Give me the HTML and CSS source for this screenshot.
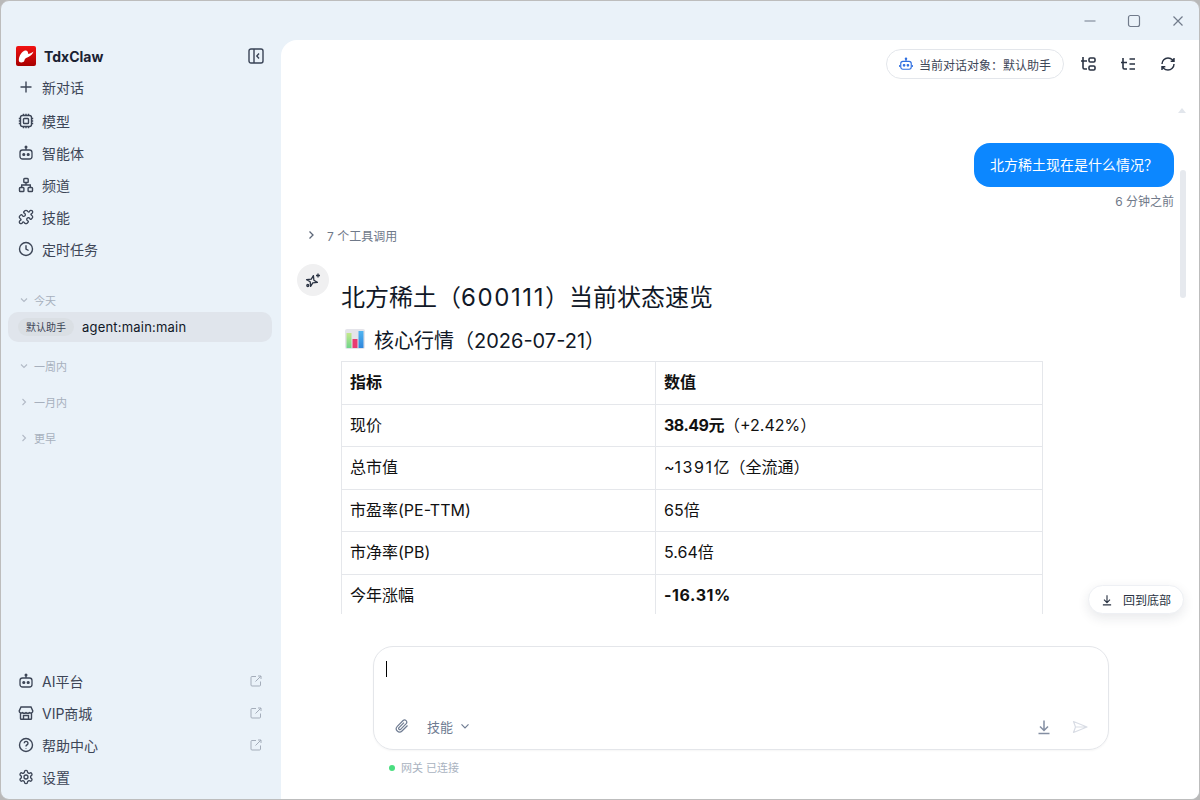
FILE: index.html
```html
<!DOCTYPE html>
<html lang="zh">
<head>
<meta charset="utf-8">
<title>TdxClaw</title>
<link rel="stylesheet" href="styles.css">
</head>
<body>
<div class="window">
  <aside class="sidebar">
    <div class="brand">
      <svg class="logo" viewBox="0 0 20 20"><defs><linearGradient id="lg" x1="0" y1="0" x2="0" y2="1"><stop offset="0" stop-color="#f21212"/><stop offset="1" stop-color="#a80000"/></linearGradient></defs><rect width="20" height="20" rx="2" fill="url(#lg)"/><path d="M17.500 5.500C15.500 7 13.500 7.800 12 7.800 12.400 5.800 11 4 9 4.600 6 5.600 2.800 10 2.800 14.200c0 2.200 2.400 2.600 4.400 1.800 1.600-.7 1-2.300 2-3.300 2.400-2 6.500-2 8.300-7.200z" fill="#fff"/></svg>
      <span class="brand-name">TdxClaw</span>
      <svg class="ico collapse" viewBox="0 0 16 16"><rect x="1" y="1" width="14" height="14" rx="2"/><path d="M6 1v14M11 5.500 8.800 8l2.200 2.500"/></svg>
    </div>
    <nav class="nav new">
      <a class="item"><svg class="ico" viewBox="0 0 16 16"><path d="M8 2.500v11M2.500 8h11"/></svg><span>新对话</span></a>
    </nav>
    <nav class="nav">
      <a class="item"><svg class="ico" viewBox="0 0 16 16"><rect x="2.500" y="2.500" width="11" height="11" rx="2"/><rect x="5.500" y="5.500" width="5" height="5" rx=".8"/><path d="M5.500 .8v1.700M8 .8v1.700M10.500 .8v1.700M5.500 13.500v1.700M8 13.500v1.700M10.500 13.500v1.700M.8 5.500h1.700M.8 8h1.700M.8 10.500h1.700M13.500 5.500h1.700M13.500 8h1.700M13.500 10.500h1.700"/></svg><span>模型</span></a>
      <a class="item"><svg class="ico" viewBox="0 0 16 16"><use href="#bot"/></svg><span>智能体</span></a>
      <a class="item"><svg class="ico" viewBox="0 0 16 16"><rect x="5.800" y="1.500" width="4.400" height="4" rx=".8"/><rect x="1.500" y="10.500" width="4.400" height="4" rx=".8"/><rect x="10.100" y="10.500" width="4.400" height="4" rx=".8"/><path d="M8 5.500V8M3.700 10.500V8h8.600v2.500"/></svg><span>频道</span></a>
      <a class="item"><svg class="ico lucide" viewBox="0 0 24 24"><path d="M19.439 7.85c-.049.322.059.648.289.878l1.568 1.568c.47.47.706 1.087.706 1.704s-.235 1.233-.706 1.704l-1.611 1.611a.98.98 0 0 1-.837.276c-.47-.07-.802-.48-.968-.925a2.501 2.501 0 1 0-3.214 3.214c.446.166.855.497.925.968a.979.979 0 0 1-.276.837l-1.61 1.61a2.404 2.404 0 0 1-1.705.707 2.402 2.402 0 0 1-1.704-.706l-1.568-1.568a1.026 1.026 0 0 0-.877-.29c-.493.074-.84.504-1.02.968a2.5 2.5 0 1 1-3.237-3.237c.464-.18.894-.527.967-1.02a1.026 1.026 0 0 0-.289-.877l-1.568-1.568A2.402 2.402 0 0 1 1.998 12c0-.617.236-1.234.706-1.704L4.230 8.770c.24-.24.581-.353.917-.303.515.077.877.528 1.073 1.010a2.5 2.5 0 1 0 3.259-3.259c-.482-.196-.933-.558-1.010-1.073-.05-.336.062-.676.303-.917l1.525-1.525A2.402 2.402 0 0 1 12 1.998c.617 0 1.234.236 1.704.706l1.568 1.568c.23.23.556.338.877.29.493-.074.84-.504 1.020-.968a2.5 2.5 0 1 1 3.237 3.237c-.464.18-.894.527-.967 1.020Z"/></svg><span>技能</span></a>
      <a class="item"><svg class="ico" viewBox="0 0 16 16"><circle cx="8" cy="8" r="6.500"/><path d="M8 4.200V8l2.600 1.500"/></svg><span>定时任务</span></a>
    </nav>
    <section class="history">
      <div class="group"><svg class="chev" viewBox="0 0 10 10"><path d="M2 3.500 5 6.500 8 3.500"/></svg><span>今天</span></div>
      <div class="session"><span class="tag">默认助手</span><span class="session-name">agent:main:main</span></div>
      <div class="group later"><svg class="chev" viewBox="0 0 10 10"><path d="M2 3.500 5 6.500 8 3.500"/></svg><span>一周内</span></div>
      <div class="group later"><svg class="chev" viewBox="0 0 10 10"><path d="M3.500 2 6.500 5 3.500 8"/></svg><span>一月内</span></div>
      <div class="group later"><svg class="chev" viewBox="0 0 10 10"><path d="M3.500 2 6.500 5 3.500 8"/></svg><span>更早</span></div>
    </section>
    <nav class="nav bottom">
      <a class="item"><svg class="ico" viewBox="0 0 16 16"><use href="#bot"/></svg><span>AI平台</span><svg class="ext" viewBox="0 0 12 12"><use href="#ext"/></svg></a>
      <a class="item"><svg class="ico" viewBox="0 0 16 16"><path d="M3 2h10l1.800 4a2.100 2.100 0 0 1-3.400 1.600 2.600 2.600 0 0 1-3.400 0 2.600 2.600 0 0 1-3.400 0A2.100 2.100 0 0 1 1.200 6zM2.500 8v5.500a.8.800 0 0 0 .8.800h9.400a.8.800 0 0 0 .8-.8V8M5.500 14v-3.500h5V14"/></svg><span>VIP商城</span><svg class="ext" viewBox="0 0 12 12"><use href="#ext"/></svg></a>
      <a class="item"><svg class="ico" viewBox="0 0 16 16"><circle cx="8" cy="8" r="6.500"/><path d="M6.200 6.300a1.900 1.900 0 1 1 2.700 1.700c-.6.300-.9.700-.9 1.400"/><path d="M8 11.300v.4"/></svg><span>帮助中心</span><svg class="ext" viewBox="0 0 12 12"><use href="#ext"/></svg></a>
      <a class="item"><svg class="ico lucide" viewBox="0 0 24 24"><path d="M12.220 2h-.44a2 2 0 0 0-2 2v.18a2 2 0 0 1-1 1.730l-.43.250a2 2 0 0 1-2 0l-.15-.08a2 2 0 0 0-2.730.730l-.22.380a2 2 0 0 0 .730 2.730l.15.100a2 2 0 0 1 1 1.720v.510a2 2 0 0 1-1 1.740l-.15.090a2 2 0 0 0-.730 2.730l.22.380a2 2 0 0 0 2.730.730l.15-.08a2 2 0 0 1 2 0l.43.250a2 2 0 0 1 1 1.730V20a2 2 0 0 0 2 2h.44a2 2 0 0 0 2-2v-.18a2 2 0 0 1 1-1.730l.43-.25a2 2 0 0 1 2 0l.15.08a2 2 0 0 0 2.730-.730l.22-.39a2 2 0 0 0-.730-2.730l-.15-.08a2 2 0 0 1-1-1.740v-.5a2 2 0 0 1 1-1.740l.15-.09a2 2 0 0 0 .730-2.730l-.22-.38a2 2 0 0 0-2.730-.730l-.15.08a2 2 0 0 1-2 0l-.43-.25a2 2 0 0 1-1-1.730V4a2 2 0 0 0-2-2z"/><circle cx="12" cy="12" r="3"/></svg><span>设置</span></a>
    </nav>
  </aside>
  <div class="right">
    <div class="titlebar">
      <svg class="win" viewBox="0 0 14 14"><path d="M1.500 7h11"/></svg>
      <svg class="win" viewBox="0 0 14 14"><rect x="1.500" y="1.500" width="11" height="11" rx="2"/></svg>
      <svg class="win" viewBox="0 0 14 14"><path d="M2.500 2.500l9 9M11.500 2.500l-9 9"/></svg>
    </div>
    <main class="main">
      <header class="toolbar">
        <div class="target"><svg class="target-ico" viewBox="0 0 16 16"><use href="#bot"/><path d="M.8 9v2.500M15.200 9v2.500"/></svg><span>当前对话对象：默认助手</span></div>
        <svg class="tool" viewBox="0 0 16 16"><path d="M3 1v10.500a1.500 1.500 0 0 0 1.500 1.500H7M1 5h6"/><rect x="9" y="2" width="6" height="4" rx="1.300"/><rect x="9" y="10" width="6" height="4" rx="1.300"/></svg>
        <svg class="tool" viewBox="0 0 16 16"><path d="M3 2v9.500A1.500 1.500 0 0 0 4.500 13H7M1 6.500h6M9.500 3H15M9.500 8H15M9.500 13H15"/></svg>
        <svg class="tool lucide" viewBox="0 0 24 24"><path d="M3 12a9 9 0 0 1 9-9 9.750 9.750 0 0 1 6.740 2.740L21 8M21 3v5h-5M21 12a9 9 0 0 1-9 9 9.750 9.750 0 0 1-6.740-2.740L3 16M8 16H3v5"/></svg>
      </header>
      <div class="content">
        <div class="scroll">
          <div class="user-row"><div class="bubble">北方稀土现在是什么情况？</div></div>
          <div class="time">6 分钟之前</div>
          <div class="tools"><svg class="tools-chev" viewBox="0 0 10 10"><path d="M3.500 1.500 7 5 3.500 8.500"/></svg><span>7 个工具调用</span></div>
          <div class="reply">
            <div class="avatar"><svg viewBox="0 0 16 16"><path d="M8.400 3.600 8.900 8.200 12.400 10.400 7.800 10.800 5.600 14.400 5.200 9.800 1.600 7.600 6.300 7.200z" stroke-linejoin="round"/><path d="M13 1.500v4M11 3.500h4"/><circle cx="2.800" cy="13.500" r="1"/></svg></div>
            <article class="answer">
              <h1>北方稀土（<span class="digits">600111</span>）当前状态速览</h1>
              <h2><svg class="chart" viewBox="0 0 20 20"><defs><linearGradient id="cg" x1="0" y1="0" x2="0" y2="1"><stop offset="0" stop-color="#c4e98a"/><stop offset="1" stop-color="#6fd58c"/></linearGradient><linearGradient id="cb" x1="0" y1="0" x2="0" y2="1"><stop offset="0" stop-color="#4fb4f0"/><stop offset="1" stop-color="#2f86dc"/></linearGradient></defs><rect width="20" height="20" rx="2" fill="#e4e4ea"/><rect x="1.500" y="4" width="5" height="15" fill="url(#cg)"/><rect x="7.500" y="10" width="5" height="9" fill="#e83b72"/><rect x="13.500" y="2" width="5" height="17" fill="url(#cb)"/></svg><span>核心行情（2026-07-21）</span></h2>
              <table>
                <tr><th class="first">指标</th><th>数值</th></tr>
                <tr><td>现价</td><td><b class="tight">38.49元</b>（+2.42%）</td></tr>
                <tr><td>总市值</td><td>~<span class="spread">1391</span>亿（全流通）</td></tr>
                <tr><td>市盈率(PE-TTM)</td><td>65倍</td></tr>
                <tr><td>市净率(PB)</td><td>5.64倍</td></tr>
                <tr><td>今年涨幅</td><td><b class="wide">-16.31%</b></td></tr>
              </table>
            </article>
          </div>
        </div>
        <div class="scrollbar"><span class="arrow"></span><span class="thumb"></span></div>
        <button class="to-bottom"><svg viewBox="0 0 16 16"><use href="#down"/></svg><span>回到底部</span></button>
      </div>
      <div class="composer-wrap">
        <div class="composer">
          <div class="caret"></div>
          <div class="composer-bar">
            <svg class="clip" viewBox="0 0 16 16"><path d="M13.500 7.500 8 13a3.300 3.300 0 0 1-4.700-4.700l5.800-5.800a2.200 2.200 0 0 1 3.100 3.100l-5.600 5.700a1.100 1.100 0 0 1-1.600-1.600l5-5"/></svg>
            <span class="skill">技能</span>
            <svg class="skill-chev" viewBox="0 0 10 10"><path d="M1.500 3.300 5 6.800 8.500 3.300"/></svg>
            <span class="spacer"></span>
            <svg class="save" viewBox="0 0 16 16"><use href="#down"/></svg>
            <svg class="send" viewBox="0 0 16 16"><path d="M1.500 2.500 15 8 1.500 13.500 3.500 8zM3.500 8H15" stroke-linejoin="round"/></svg>
          </div>
        </div>
        <div class="status"><i class="dot"></i><span>网关 已连接</span></div>
      </div>
    </main>
  </div>
</div>
<svg class="defs" aria-hidden="true">
  <symbol id="bot" viewBox="0 0 16 16"><rect x="2" y="5" width="12" height="9" rx="2.500" fill="none" stroke="currentColor" stroke-width="1.300"/><path d="M8 5V2.500" fill="none" stroke="currentColor" stroke-width="1.300"/><circle cx="8" cy="2" r=".8" fill="currentColor"/><circle cx="5.800" cy="9.500" r=".9" fill="currentColor"/><circle cx="10.200" cy="9.500" r=".9" fill="currentColor"/></symbol>
  <symbol id="ext" viewBox="0 0 12 12"><path d="M6 1.500H2a1 1 0 0 0-1 1V10a1 1 0 0 0 1 1h7.500a1 1 0 0 0 1-1V6.500M5.500 6.500 11 1M8 1h3v3" fill="none" stroke="currentColor"/></symbol>
  <symbol id="down" viewBox="0 0 16 16"><path d="M8 1.500v9.500M4 7.500 8 11.500 12 7.500M2.500 14.500h11" fill="none" stroke="currentColor" stroke-width="1.500"/></symbol>
</svg>
</body>
</html>
```
FILE: styles.css
```css
* { box-sizing: border-box; }
html, body { margin: 0; height: 100%; background: #b9b9b9; overflow: hidden; }
body { font-family: Inter, "Noto Sans CJK SC", sans-serif; color: #000; }
.defs { display: none; }
.window {
  height: 800px;
  display: flex;
  background: #eaf2f9;
  border: 1px solid #bdbdbd;
  border-radius: 9px;
  overflow: hidden;
}
svg { display: block; flex: none; }
.ico, .win, .tool, .chev, .tools-chev, .clip, .skill-chev, .send, .avatar svg, .target-ico { fill: none; stroke: currentColor; }

.sidebar { width: 280px; flex: none; display: flex; flex-direction: column; padding: 45px 8px 6px 7px; color: #3d4657; }
.brand { display: flex; align-items: center; height: 20px; padding-left: 8px; }
.logo { width: 20px; height: 20px; }
.brand-name { margin-left: 8px; font-size: 14px; font-weight: 700; color: #1a2233; }
.ico { width: 16px; height: 16px; stroke-width: 1.400; }
.ico.lucide { stroke-width: 2; stroke-linejoin: round; }
.collapse { margin-left: auto; margin-right: 9px; color: #394356; }
.nav { display: flex; flex-direction: column; }
.new { margin-top: 5px; margin-bottom: 2px; }
.item { height: 32px; display: flex; align-items: center; padding-left: 10px; font-size: 14px; }
.item > span { margin-left: 8px; }
.ext { width: 12px; height: 12px; margin-left: auto; margin-right: 11px; color: #a4adba; }

.history { margin-top: 23px; flex: 1; }
.group { height: 24px; display: flex; align-items: center; gap: 5px; padding-left: 11px; font-size: 11px; color: #a7b0bd; }
.chev { width: 10px; height: 10px; color: #b2bac6; stroke-width: 1.100; }
.session { height: 30px; display: flex; align-items: center; padding-left: 10px; background: #e0e5ec; border-radius: 10px; width: 264px; }
.tag { height: 18px; line-height: 18px; padding: 0 8px; border-radius: 9px; background: #dadfe4; font-size: 10px; color: #3d4657; }
.session-name { margin-left: 8px; font-size: 13px; letter-spacing: .2px; color: #111827; }
.group.later { margin-top: 12px; }

.right { flex: 1; display: flex; flex-direction: column; min-width: 0; }
.titlebar { height: 39px; flex: none; display: flex; justify-content: flex-end; align-items: center; gap: 30px; padding: 0 14px 0 0; color: #717b8b; }
.win { width: 14px; height: 14px; stroke-width: 1.200; }
.main { flex: 1; background: #fff; border-top-left-radius: 16px; display: flex; flex-direction: column; min-height: 0; }
.toolbar { height: 48px; flex: none; display: flex; align-items: center; justify-content: flex-end; padding: 0 23px 0 0; }
.target { height: 30px; display: flex; align-items: center; gap: 6px; padding: 0 12px; border: 1px solid #e3e6eb; border-radius: 15px; font-size: 12px; color: #3d4657; }
.target-ico { width: 14px; height: 14px; color: #2f6fe0; stroke-width: 1.300; }
.tool { width: 16px; height: 16px; margin-left: 24px; color: #2a3343; stroke-width: 1.600; }
.tool.lucide { stroke-width: 2.200; }
.target + .tool { margin-left: 16px; }

.content { position: relative; flex: 1; min-height: 0; }
.scroll { height: 100%; overflow: hidden; padding: 55px 25px 0 16px; }
.user-row { display: flex; justify-content: flex-end; }
.bubble { height: 44px; line-height: 44px; padding: 0 16px; background: #0c87ff; color: #fff; border-radius: 16px; font-size: 14px; }
.time { margin-top: 6px; text-align: right; font-size: 12px; line-height: 18px; color: #6f7989; }
.tools { display: flex; align-items: center; gap: 11px; margin: 14px 0 0 9px; height: 20px; font-size: 12px; color: #6f7989; }
.tools-chev { width: 10px; height: 10px; color: #5d6778; stroke-width: 1.300; }
.reply { display: flex; margin-top: 19px; }
.avatar { width: 32px; height: 32px; border-radius: 50%; background: #f0f0f1; display: flex; align-items: center; justify-content: center; color: #2a3343; flex: none; }
.avatar svg { width: 16px; height: 16px; stroke-width: 1.300; }
.answer { margin-left: 12px; width: 702px; }
h1 { margin: 19px 0 0; font-size: 24px; font-weight: 400; line-height: 30px; color: #111827; }
.digits { letter-spacing: 1.600px; }
h2 { margin: 11px 0 0; height: 30px; display: flex; align-items: center; gap: 9px; padding-left: 4px; font-size: 20px; font-weight: 400; color: #111827; }
.chart { width: 20px; height: 20px; }
table { margin-top: 7px; width: 702px; border-collapse: collapse; table-layout: fixed; font-size: 16px; line-height: 25.600px; color: #111; }
th, td { border: 1px solid #e5e7eb; padding: 8px; text-align: left; font-weight: 400; }
th.first { width: 314px; }
th, b { font-weight: 700; }
.tight { letter-spacing: -.5px; }
.wide { letter-spacing: .6px; }
.spread { letter-spacing: 1.500px; }

.scrollbar { position: absolute; top: 0; right: 0; width: 24px; height: 100%; }
.arrow { position: absolute; top: 20px; left: 3px; border: 4px solid transparent; border-top: 0; border-bottom: 5px solid #e2e6ec; }
.thumb { position: absolute; top: 82px; left: 5px; width: 6px; height: 128px; border-radius: 3px; background: #e6e9ee; }
.to-bottom { position: absolute; right: 15px; top: 497px; height: 29px; display: flex; align-items: center; gap: 10px; padding: 0 12px; background: #fff; border: 1px solid #eef0f4; border-radius: 15px; box-shadow: 0 4px 12px rgba(30, 40, 60, .10); font: 12px Inter, "Noto Sans CJK SC", sans-serif; color: #2a3343; }
.to-bottom svg { width: 12px; height: 12px; color: #2a3343; }

.composer-wrap { flex: none; height: 185px; padding: 32px 0 0 92px; }
.composer { width: 736px; height: 104px; border: 1px solid #e4e6ea; border-radius: 20px; padding: 14px 12px 7px; display: flex; flex-direction: column; box-shadow: 0 1px 2px rgba(0,0,0,.04); }
.caret { width: 1px; height: 16px; background: #000; }
.composer-bar { margin-top: auto; height: 32px; display: flex; align-items: center; color: #6f7c92; }
.clip { width: 16px; height: 16px; margin-left: 8px; stroke-width: 1.200; }
.skill { margin-left: 17px; font-size: 13px; }
.skill-chev { width: 10px; height: 10px; margin-left: 7px; stroke-width: 1.200; }
.spacer { flex: 1; }
.save { width: 16px; height: 16px; color: #838ea2; margin-top: 2px; }
.send { width: 16px; height: 16px; margin: 2px 8px 0 20px; color: #d9dde5; stroke-width: 1.200; }
.status { display: flex; align-items: center; gap: 6px; margin: 9px 0 0 16px; font-size: 11px; color: #a9b2c0; line-height: 18px; }
.dot { width: 6px; height: 6px; border-radius: 50%; background: #4ade80; }
```
